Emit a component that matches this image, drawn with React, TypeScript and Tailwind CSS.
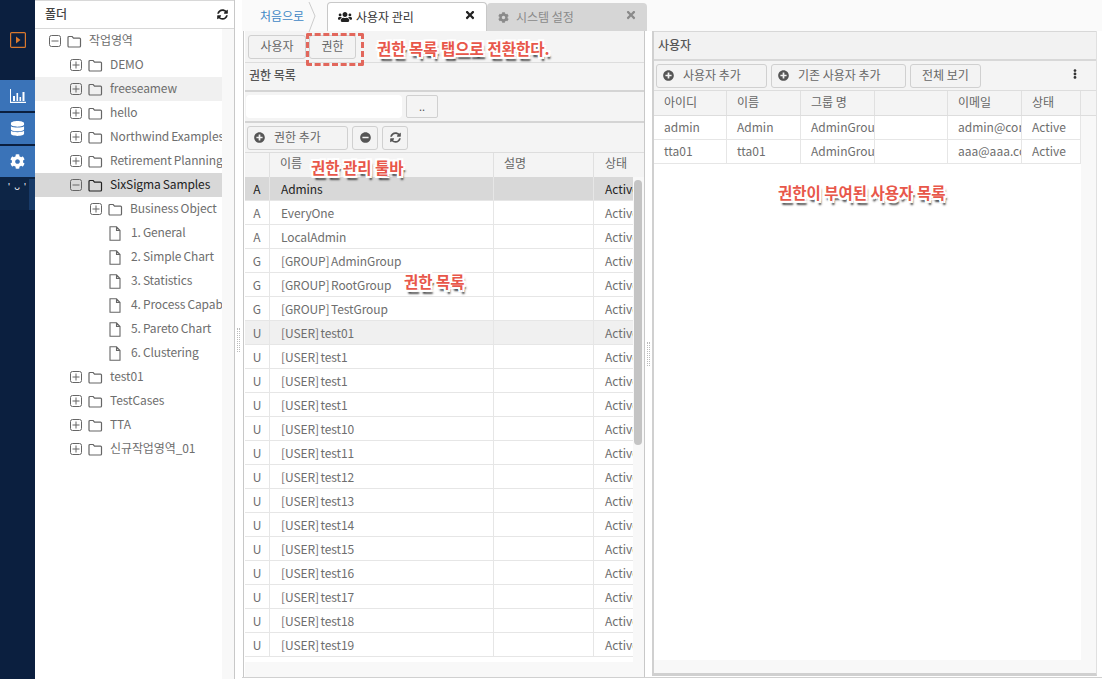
import { FaCog, FaDatabase, FaEllipsisV, FaMinusCircle, FaPlusCircle, FaSyncAlt, FaTimes, FaUsers } from "react-icons/fa";

const FONT = "font-['Noto_Sans_CJK_KR','Noto_Sans',sans-serif]";

function FolderIcon({ dark }: { dark?: boolean }) {
  return (
    <svg width="15" height="13" viewBox="0 0 15 13" fill="none" stroke={dark ? "#222" : "#666"} strokeWidth="1.2" className="shrink-0">
      <path d="M1 2.5 a1 1 0 0 1 1-1 h3.2 l1.3 1.6 h6 a1 1 0 0 1 1 1 v6.9 a1 1 0 0 1-1 1 h-10.5 a1 1 0 0 1-1-1 z" />
    </svg>
  );
}

function FileIcon() {
  return (
    <svg width="12" height="15" viewBox="0 0 12 15" fill="none" stroke="#666" strokeWidth="1.1" className="shrink-0">
      <path d="M1 .8 h6.5 l3.5 3.6 v9.8 h-10 z M7.5 .8 v3.6 h3.5" />
    </svg>
  );
}

function ExpandBox({ open }: { open?: boolean }) {
  return (
    <svg width="12" height="12" viewBox="0 0 12 12" fill="none" stroke="#666" strokeWidth="1" className="shrink-0">
      <rect x=".5" y=".5" width="11" height="11" rx="2" />
      <path d={open ? "M2.5 6 h7" : "M2.5 6 h7 M6 2.5 v7"} />
    </svg>
  );
}

type TreeRow = { label: string; level: number; kind: "plus" | "minus" | "file"; state?: "hover" | "selected" };

const treeRows: TreeRow[] = [
  { label: "작업영역", level: 0, kind: "minus" },
  { label: "DEMO", level: 1, kind: "plus" },
  { label: "freeseamew", level: 1, kind: "plus", state: "hover" },
  { label: "hello", level: 1, kind: "plus" },
  { label: "Northwind Examples", level: 1, kind: "plus" },
  { label: "Retirement Planning", level: 1, kind: "plus" },
  { label: "SixSigma Samples", level: 1, kind: "minus", state: "selected" },
  { label: "Business Object", level: 2, kind: "plus" },
  { label: "1. General", level: 2, kind: "file" },
  { label: "2. Simple Chart", level: 2, kind: "file" },
  { label: "3. Statistics", level: 2, kind: "file" },
  { label: "4. Process Capability", level: 2, kind: "file" },
  { label: "5. Pareto Chart", level: 2, kind: "file" },
  { label: "6. Clustering", level: 2, kind: "file" },
  { label: "test01", level: 1, kind: "plus" },
  { label: "TestCases", level: 1, kind: "plus" },
  { label: "TTA", level: 1, kind: "plus" },
  { label: "신규작업영역_01", level: 1, kind: "plus" },
];

const permissions = [
  ["A", "Admins"],
  ["A", "EveryOne"],
  ["A", "LocalAdmin"],
  ["G", "[GROUP] AdminGroup"],
  ["G", "[GROUP] RootGroup"],
  ["G", "[GROUP] TestGroup"],
  ["U", "[USER] test01"],
  ["U", "[USER] test1"],
  ["U", "[USER] test1"],
  ["U", "[USER] test1"],
  ["U", "[USER] test10"],
  ["U", "[USER] test11"],
  ["U", "[USER] test12"],
  ["U", "[USER] test13"],
  ["U", "[USER] test14"],
  ["U", "[USER] test15"],
  ["U", "[USER] test16"],
  ["U", "[USER] test17"],
  ["U", "[USER] test18"],
  ["U", "[USER] test19"],
];

const users = [
  ["admin", "Admin", "AdminGroup", "", "admin@company.com", "Active"],
  ["tta01", "tta01", "AdminGroup", "", "aaa@aaa.com", "Active"],
];

const userCols = ["w-[73px]", "w-[74px]", "w-[74px]", "w-[73px]", "w-[74px]", "w-[59px]"];

function Annotation({ text, className }: { text: string; className: string }) {
  return (
    <span className={`absolute whitespace-nowrap font-bold text-[15.5px] leading-none text-[#e8574a] [text-shadow:2px_2px_0_#fff,-2px_-2px_0_#fff,2px_-2px_0_#fff,-2px_2px_0_#fff,2px_0_0_#fff,-2px_0_0_#fff,0_2px_0_#fff,0_-2px_0_#fff,2px_4px_2px_#333] ${className}`}>
      {text}
    </span>
  );
}

function ToolButton({ children, className }: { children: React.ReactNode; className: string }) {
  return (
    <button className={`h-[24px] flex items-center rounded-[3px] border border-[#d0d0d0] bg-[#f3f3f3] text-[12px] text-[#666] ${className}`}>
      {children}
    </button>
  );
}

export default function App() {
  return (
    <div className={`relative flex h-[679px] w-[1102px] overflow-hidden bg-white ${FONT}`}>
      <aside className="flex w-[35px] shrink-0 flex-col bg-[#0b1f3f]">
        <div className="flex h-[80px] items-center justify-center text-[#d9782d]">
          <svg width="16" height="16" viewBox="0 0 16 16" fill="none" stroke="currentColor" strokeWidth="1.2">
            <rect x=".6" y=".6" width="14.8" height="14.8" rx="1" />
            <path d="M6 4.5 L10.5 8 L6 11.5 z" fill="currentColor" stroke="none" />
          </svg>
        </div>
        <div className="mb-[2px] flex h-[31px] items-center justify-center bg-[#3a73b8] text-white">
          <svg width="16" height="14" viewBox="0 0 16 14" fill="currentColor">
            <path d="M0 0 h1 v12.8 h15 v1.2 h-16 z M3 7 h2 v5 h-2 z M6.5 4 h1.6 v8 h-1.6 z M9.5 8 h1.6 v4 h-1.6 z M12.5 3 h2 v9 h-2 z" />
          </svg>
        </div>
        <div className="mb-[2px] flex h-[31px] items-center justify-center bg-[#3a73b8] text-white"><FaDatabase size={15} /></div>
        <div className="flex h-[31px] items-center justify-center bg-[#3a73b8] text-white"><FaCog size={15} /></div>
        <div className="relative flex h-[33px] items-start justify-center bg-[#0d2546] pt-[5px] text-[9px] leading-none text-white">
          <span className="tracking-[1px]">' ᴗ '</span>
          <div className="absolute right-0 top-[2px] h-[31px] w-[6px] bg-[#173a68]" />
        </div>
      </aside>

      <section className="flex w-[200px] shrink-0 flex-col border-r border-[#c8c8c8]">
        <header className="flex h-[29px] shrink-0 items-center justify-between border-y border-[#d8d8d8] pl-[10px] pr-[6px] text-[12px] font-medium text-[#444]">
          <span className="pb-[2px]">폴더</span>
          <FaSyncAlt size={11} className="text-[#222]" />
        </header>
        <div className="flex flex-1 overflow-hidden">
          <div className="w-[187px] shrink-0 tracking-[-0.1px]">
            {treeRows.map((row, i) => (
              <div
                key={i}
                className={`flex h-[24px] items-center overflow-hidden whitespace-nowrap text-[12px] [word-spacing:-0.5px] ${row.state === "selected" ? "bg-[#d8d8d8] text-[#222]" : row.state === "hover" ? "bg-[#f0f0f0] text-[#6e6e6e]" : "text-[#6e6e6e]"} ${row.level === 0 ? "pl-[14px]" : row.level === 1 ? "pl-[35px]" : "pl-[54px]"}`}
              >
                {row.kind === "file" ? (
                  <>
                    <span className="w-[20px] shrink-0" />
                    <FileIcon />
                    <span className="ml-[10px] pb-[2px]">{row.label}</span>
                  </>
                ) : (
                  <>
                    <span className={row.level === 2 ? "ml-[1px]" : ""}><ExpandBox open={row.kind === "minus"} /></span>
                    <span className="ml-[6px]"><FolderIcon dark={row.state === "selected"} /></span>
                    <span className="ml-[7px] pb-[2px]">{row.label}</span>
                  </>
                )}
              </div>
            ))}
          </div>
          <div className="flex-1 bg-[#f8f8f8]" />
        </div>
      </section>

      <div className="flex w-[7px] shrink-0 items-center justify-center">
        <div className="h-[24px] w-[3px] border-x border-dotted border-[#bbb]" />
      </div>

      <main className="flex min-w-0 flex-1 flex-col">
        <nav className="flex h-[31px] shrink-0 items-end bg-[#fafafa] pl-[1px]">
          <div className="relative flex h-[29px] w-[84px] items-center pb-[2px] pl-[17px] text-[12px] text-[#3f88c5]">
            처음으로
            <svg width="9" height="30" viewBox="0 0 9 30" fill="none" stroke="#ccc" className="absolute right-[10px] top-0"><path d="M1 0 L7 14 L1 30" /></svg>
          </div>
          <div className="flex h-[29px] w-[160px] items-center rounded-t-[4px] border border-b-0 border-[#c8c8c8] bg-white pl-[10px] pr-[10px] text-[12px] text-[#333]">
            <FaUsers size={14} className="text-[#222]" />
            <span className="ml-[4px] flex-1 pb-[1px]">사용자 관리</span>
            <FaTimes size={12} className="mb-[4px] text-[#222]" />
          </div>
          <div className="flex h-[28px] w-[160px] items-center rounded-t-[4px] bg-[#d6d6d6] pl-[11px] pr-[10px] text-[12px] text-[#8a8a8a]">
            <FaCog size={11} />
            <span className="ml-[7px] flex-1">시스템 설정</span>
            <FaTimes size={12} className="mb-[4px]" />
          </div>
        </nav>

        <div className="mb-[1px] flex min-h-0 flex-1 border-b border-[#d0d0d0]">
          <section className="ml-[1px] flex w-[402px] shrink-0 flex-col border-x border-[#c8c8c8] pl-[1px]">
            <div className="flex h-[32px] shrink-0 items-center gap-[3px] border-b border-[#ddd] bg-[#f4f4f4] pl-[3px]">
              <button className="h-[24px] w-[58px] rounded-[3px] border border-[#d0d0d0] bg-[#f3f3f3] pb-[2px] text-[12px] text-[#666]">사용자</button>
              <button className="h-[24px] w-[47px] rounded-[3px] border border-[#d0d0d0] bg-[#f3f3f3] pb-[2px] text-[12px] text-[#666]">권한</button>
            </div>
            <div className="flex h-[29px] shrink-0 items-center border-b-[2px] border-[#d4d4d4] bg-[#f4f4f4] pb-[3px] pl-[4px] text-[12px] font-medium text-[#555]">권한 목록</div>
            <div className="flex h-[31px] shrink-0 items-center gap-[4px] border-b-[2px] border-[#d4d4d4] bg-[#f4f4f4] pl-[1px]">
              <div className="h-[23px] w-[156px] rounded-[4px] bg-white" />
              <button className="h-[23px] w-[32px] rounded-[2px] border border-[#d0d0d0] text-[11px] text-[#555]">..</button>
            </div>
            <div className="flex h-[30px] shrink-0 items-center gap-[4px] border-b border-[#ddd] bg-[#f4f4f4] pl-[2px]">
              <ToolButton className="w-[101px] pl-[6px]">
                <FaPlusCircle size={11} className="text-[#555]" />
                <span className="ml-[9px] pb-[2px]">권한 추가</span>
              </ToolButton>
              <ToolButton className="w-[26px] justify-center"><FaMinusCircle size={11} className="text-[#555]" /></ToolButton>
              <ToolButton className="w-[26px] justify-center"><FaSyncAlt size={11} className="text-[#555]" /></ToolButton>
            </div>
            <div className="relative min-h-0 flex-1 overflow-hidden">
              <div className="flex h-[24px] bg-[#f4f4f4] text-[12px] text-[#666]">
                <div className="w-[25px] border-r border-[#e0e0e0]" />
                <div className="w-[224px] border-r border-[#e0e0e0] pl-[10px] leading-[20px]">이름</div>
                <div className="w-[100px] border-r border-[#e0e0e0] pl-[10px] leading-[20px]">설명</div>
                <div className="pl-[11px] leading-[20px]">상태</div>
              </div>
              {permissions.map(([type, name], i) => (
                <div
                  key={i}
                  className={`flex h-[24px] border-b border-[#e6e6e6] text-[12px] leading-[23px] ${i === 0 ? "bg-[#d8d8d8] text-[#222]" : i === 6 ? "bg-[#f0f0f0] text-[#6e6e6e]" : "text-[#6e6e6e]"}`}
                >
                  <div className="w-[25px] border-r border-[#e6e6e6] text-center">{type}</div>
                  <div className="w-[224px] border-r border-[#e6e6e6] pl-[11px] tracking-[-0.1px] [word-spacing:-1px]">{name}</div>
                  <div className="w-[100px] border-r border-[#e6e6e6]" />
                  <div className="w-[39px] overflow-hidden whitespace-nowrap pl-[11px]">Active</div>
                </div>
              ))}
              <div className="absolute bottom-0 right-0 top-[24px] w-[11px] bg-[#f8f8f8]">
                <div className="ml-[1px] mt-[3px] h-[265px] w-[8px] rounded-[4px] bg-[#c4c4c4]" />
              </div>
              <div className="absolute bottom-0 left-0 right-0 h-[15px] bg-[#f8f8f8]" />
            </div>
          </section>

          <div className="flex w-[7px] shrink-0 items-center justify-center">
            <div className="h-[24px] w-[3px] border-x border-dotted border-[#bbb]" />
          </div>

          <section className="flex w-[445px] shrink-0 flex-col pb-[1px]">
            <div className="flex flex-1 flex-col overflow-hidden border-b-[3px] border-l-[2px] border-r border-[#d0d0d0] border-r-[#e0e0e0] bg-white">
              <div className="flex h-[28px] shrink-0 items-center border-t border-[#d8d8d8] bg-[#f2f2f2] pb-[2px] pl-[4px] text-[12px] font-medium text-[#555]">사용자</div>
              <div className="flex h-[32px] shrink-0 items-center gap-[4px] border-t-[2px] border-b border-t-[#d8d8d8] border-b-[#ddd] bg-[#f4f4f4] pl-[2px]">
                <ToolButton className="w-[111px] pl-[6px]">
                  <FaPlusCircle size={11} className="text-[#555]" />
                  <span className="ml-[9px] pb-[2px]">사용자 추가</span>
                </ToolButton>
                <ToolButton className="w-[135px] pl-[6px]">
                  <FaPlusCircle size={11} className="text-[#555]" />
                  <span className="ml-[9px] pb-[2px]">기존 사용자 추가</span>
                </ToolButton>
                <ToolButton className="w-[71px] justify-center pb-[2px]">전체 보기</ToolButton>
                <FaEllipsisV size={10} className="ml-[85px] mb-[4px] text-[#333]" />
              </div>
              <div className="flex h-[25px] shrink-0 border-b border-[#ddd] bg-[#f4f4f4] text-[12px] leading-[22px] text-[#666]">
                {["아이디", "이름", "그룹 명", "", "이메일", "상태"].map((h, i) => (
                  <div key={i} className={`${userCols[i]} shrink-0 border-r border-[#e0e0e0] pl-[10px]`}>{h}</div>
                ))}
              </div>
              <div className="flex flex-1 flex-col">
                <div className="flex flex-1">
                  <div className="w-[427px] shrink-0">
                    {users.map((row, r) => (
                      <div key={r} className="flex h-[24px] border-b border-[#e6e6e6] text-[12px] leading-[21px] text-[#6e6e6e]">
                        {row.map((cell, c) => (
                          <div key={c} className={`${userCols[c]} shrink-0 overflow-hidden whitespace-nowrap border-r border-[#e6e6e6] pl-[10px]`}>{cell}</div>
                        ))}
                      </div>
                    ))}
                  </div>
                  <div className="flex-1 bg-[#f8f8f8]" />
                </div>
                <div className="h-[13px] shrink-0 bg-[#f8f8f8]" />
              </div>
            </div>
          </section>
        </div>
      </main>

      <div className="absolute left-[306px] top-[33px] h-[33px] w-[58px] rounded-[2px] border-[3px] border-dashed border-[#e2675c]" />
      <Annotation text="권한 목록 탭으로 전환한다." className="left-[377px] top-[41px]" />
      <Annotation text="권한 관리 툴바" className="left-[311px] top-[160px]" />
      <Annotation text="권한 목록" className="left-[404px] top-[274px]" />
      <Annotation text="권한이 부여된 사용자 목록" className="left-[778px] top-[185px]" />
    </div>
  );
}
